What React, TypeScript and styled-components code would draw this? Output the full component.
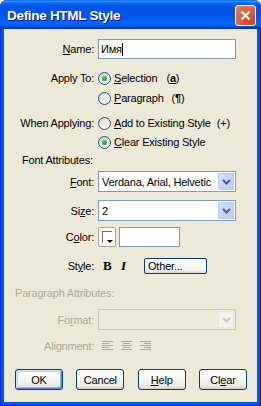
import styled, { createGlobalStyle, css } from 'styled-components';

const GlobalStyle = createGlobalStyle`
  html, body {
    margin: 0;
    padding: 0;
    background: #ffffff;
  }
  body {
    font-family: 'Liberation Sans', Arial, 'Noto Sans', sans-serif;
    font-size: 11px;
    letter-spacing: -0.2px;
    color: #000000;
  }
`;

const Window = styled.div`
  width: 261px;
  height: 406px;
  display: flex;
  flex-direction: column;
  background: #0055e5;
  box-shadow: inset 1px 0 #0831d9, inset -1px 0 #001ea0, inset 0 -1px #001ea0;
  box-sizing: border-box;
  border-radius: 7px 7px 0 0;
  overflow: hidden;
`;

const TitleBar = styled.div`
  height: 29px;
  flex: none;
  display: flex;
  align-items: center;
  justify-content: space-between;
  padding: 0 5px 0 7px;
  background: linear-gradient(
    180deg,
    #0058ee 0%,
    #3593ff 4%,
    #288eff 6%,
    #127dff 8%,
    #036ffc 10%,
    #0262ee 14%,
    #0057e5 20%,
    #0054e3 24%,
    #0055eb 56%,
    #005bf5 66%,
    #026afe 76%,
    #0062ef 86%,
    #0052d6 92%,
    #0040ab 94%,
    #003092 100%
  );
`;

const Title = styled.span`
  color: #ffffff;
  font-family: 'Liberation Sans', Arial, sans-serif;
  font-weight: bold;
  font-size: 13.5px;
  letter-spacing: -0.3px;
  text-shadow: 1px 1px #0f1089;
  margin-top: 1px;
`;

const CloseButton = styled.div`
  width: 21px;
  height: 21px;
  box-sizing: border-box;
  border: 1px solid #ffffff;
  border-radius: 3px;
  background: radial-gradient(circle at 85% 85%, #cc4622 0%, #dc5a36 40%, #e27253 80%, #f09a7e 100%);
  display: flex;
  align-items: center;
  justify-content: center;
  margin-top: 2px;
`;

const Body = styled.div`
  flex: 1;
  margin: 0 4px 4px 4px;
  background: #ece9d8;
  padding-top: 10px;
  display: flex;
  flex-direction: column;
`;

const Row = styled.div<{ $h: number; $mt: number }>`
  display: grid;
  grid-template-columns: 90px 1fr;
  column-gap: 4px;
  align-items: center;
  height: ${(p) => p.$h}px;
  margin-top: ${(p) => p.$mt}px;
  flex: none;
`;

const Label = styled.span<{ $disabled?: boolean }>`
  text-align: right;
  white-space: nowrap;
  color: ${(p) => (p.$disabled ? '#aca899' : '#000000')};
`;

const SectionLabel = styled.div<{ $indent: number; $disabled?: boolean; $mt: number }>`
  height: 14px;
  line-height: 14px;
  margin-top: ${(p) => p.$mt}px;
  padding-left: ${(p) => p.$indent}px;
  color: ${(p) => (p.$disabled ? '#aca899' : '#000000')};
  flex: none;
`;

const Control = styled.div`
  display: flex;
  align-items: center;
  min-width: 0;
`;

const fieldBorder = css`
  border: 1px solid #7f9db9;
  background: #ffffff;
  box-sizing: border-box;
`;

const TextInput = styled.div<{ $w: number }>`
  ${fieldBorder}
  width: ${(p) => p.$w}px;
  height: 20px;
  display: flex;
  align-items: center;
  padding-left: 2px;
`;

const Caret = styled.span`
  display: inline-block;
  width: 1px;
  height: 13px;
  background: #000000;
`;

const RadioLine = styled.label`
  display: flex;
  align-items: center;
  gap: 3px;
  white-space: nowrap;
`;

const RadioCircle = styled.span<{ $checked?: boolean }>`
  width: 13px;
  height: 13px;
  box-sizing: border-box;
  border-radius: 50%;
  border: 1px solid #1c5180;
  background: linear-gradient(135deg, #dcd7cb 0%, #f2f1ea 60%, #ffffff 100%);
  display: flex;
  align-items: center;
  justify-content: center;
  flex: none;

  &::after {
    content: '';
    display: ${(p) => (p.$checked ? 'block' : 'none')};
    width: 5px;
    height: 5px;
    border-radius: 50%;
    background: radial-gradient(circle at 40% 40%, #5ed85a 0%, #21a121 60%, #1a8a1a 100%);
  }
`;

const Hint = styled.span<{ $ml: number }>`
  margin-left: ${(p) => p.$ml}px;
`;

const Select = styled.div<{ $disabled?: boolean }>`
  width: 138px;
  height: 21px;
  box-sizing: border-box;
  border: 1px solid ${(p) => (p.$disabled ? '#c9c7ba' : '#7f9db9')};
  background: ${(p) => (p.$disabled ? '#ece9d8' : '#ffffff')};
  display: flex;
  align-items: center;
  justify-content: space-between;
  padding: 1px;
`;

const SelectValue = styled.span`
  padding-left: 2px;
  overflow: hidden;
  white-space: nowrap;
  flex: 1;
  min-width: 0;
`;

const SelectArrow = styled.span<{ $disabled?: boolean }>`
  width: 16px;
  height: 17px;
  flex: none;
  box-sizing: border-box;
  border: 1px solid ${(p) => (p.$disabled ? '#e8e6dc' : '#b9cdf6')};
  border-radius: 1px;
  background: ${(p) =>
    p.$disabled ? '#f3f2ec' : 'linear-gradient(135deg, #d0def9 0%, #b6cbf7 100%)'};
  display: flex;
  align-items: center;
  justify-content: center;
`;

const ColorButton = styled.div`
  width: 18px;
  height: 20px;
  box-sizing: border-box;
  border: 1px solid #aca899;
  border-radius: 2px;
  background: #fbfbf8;
  position: relative;
  margin-right: 3px;
`;

const Swatch = styled.span`
  position: absolute;
  left: 3px;
  top: 3px;
  width: 10px;
  height: 12px;
  box-sizing: border-box;
  border-top: 1px solid #716f64;
  border-left: 1px solid #716f64;
  background: #ffffff;
`;

const SwatchArrow = styled.span`
  position: absolute;
  right: 2px;
  bottom: 3px;
  width: 0;
  height: 0;
  border-left: 3px solid transparent;
  border-right: 3px solid transparent;
  border-top: 3px solid #000000;
`;

const StyleGlyph = styled.span<{ $italic?: boolean; $ml: number }>`
  font-family: 'Liberation Serif', 'Times New Roman', serif;
  font-weight: bold;
  font-style: ${(p) => (p.$italic ? 'italic' : 'normal')};
  font-size: 13px;
  margin-left: ${(p) => p.$ml}px;
  width: 10px;
`;

const SmallButton = styled.div`
  width: 63px;
  height: 16px;
  box-sizing: border-box;
  border: 1px solid #003c74;
  border-radius: 2px;
  background: linear-gradient(180deg, #ffffff 0%, #f4f3ee 80%, #dcd8cc 100%);
  padding-left: 3px;
  display: flex;
  align-items: center;
  margin-left: 13px;
`;

const AlignGroup = styled.div`
  display: flex;
  gap: 8px;
  padding-left: 4px;
`;

const ButtonRow = styled.div`
  display: flex;
  justify-content: space-between;
  padding: 0 10px 0 11px;
  margin-top: 16px;
  height: 21px;
`;

const Button = styled.div<{ $default?: boolean }>`
  width: 48px;
  height: 21px;
  box-sizing: border-box;
  border: 1px solid #003c74;
  border-radius: 3px;
  background: linear-gradient(180deg, #ffffff 0%, #f3f3ef 60%, #e6e4dc 88%, #d6d0c5 100%);
  display: flex;
  align-items: center;
  justify-content: center;
  ${(p) =>
    p.$default &&
    css`
      box-shadow: inset 1px 1px #cee7ff, inset -1px -1px #6982ee, inset 2px 2px #bcd4f6,
        inset -2px -2px #89adf4;
    `}
`;

function Chevron({ color }: { color: string }) {
  return (
    <svg width="9" height="6" viewBox="0 0 9 6">
      <path d="M1 1 L4.5 4.5 L8 1" fill="none" stroke={color} strokeWidth="2" />
    </svg>
  );
}

function AlignIcon({ kind }: { kind: 'left' | 'center' | 'right' }) {
  const widths = [11, 7, 11, 7, 11];
  return (
    <svg width="11" height="10" viewBox="0 0 11 10">
      {widths.map((w, i) => {
        const x = kind === 'left' ? 0 : kind === 'center' ? (11 - w) / 2 : 11 - w;
        return <rect key={i} x={x} y={i * 2} width={w} height="1" fill="#aca899" />;
      })}
    </svg>
  );
}

function Radio({ checked, children }: { checked?: boolean; children: React.ReactNode }) {
  return (
    <RadioLine>
      <RadioCircle $checked={checked} />
      <span>{children}</span>
    </RadioLine>
  );
}

export default function App() {
  return (
    <>
      <GlobalStyle />
      <Window>
        <TitleBar>
          <Title>Define HTML Style</Title>
          <CloseButton>
            <svg width="11" height="11" viewBox="0 0 11 11">
              <path d="M1.5 1.5 L9.5 9.5 M9.5 1.5 L1.5 9.5" stroke="#ffffff" strokeWidth="2.2" />
            </svg>
          </CloseButton>
        </TitleBar>
        <Body>
          <Row $h={20} $mt={0}>
            <Label>
              <u>N</u>ame:
            </Label>
            <Control>
              <TextInput $w={138}>
                Имя
                <Caret />
              </TextInput>
            </Control>
          </Row>

          <Row $h={18} $mt={10}>
            <Label>Apply To:</Label>
            <Radio checked>
              <u>S</u>election
              <Hint $ml={9}>
                (<b>
                  <u>a</u>
                </b>
                )
              </Hint>
            </Radio>
          </Row>
          <Row $h={18} $mt={2}>
            <span />
            <Radio>
              <u>P</u>aragraph
              <Hint $ml={8}>
                (<b>¶</b>)
              </Hint>
            </Radio>
          </Row>

          <Row $h={18} $mt={7}>
            <Label>When Applying:</Label>
            <Radio>
              <u>A</u>dd to Existing Style
              <Hint $ml={6}>(+)</Hint>
            </Radio>
          </Row>
          <Row $h={18} $mt={1}>
            <span />
            <Radio checked>
              <u>C</u>lear Existing Style
            </Radio>
          </Row>

          <SectionLabel $indent={18} $mt={2}>
            Font Attributes:
          </SectionLabel>

          <Row $h={21} $mt={4}>
            <Label>
              <u>F</u>ont:
            </Label>
            <Select>
              <SelectValue>Verdana, Arial, Helvetic</SelectValue>
              <SelectArrow>
                <Chevron color="#4d6185" />
              </SelectArrow>
            </Select>
          </Row>
          <Row $h={21} $mt={8}>
            <Label>
              Si<u>z</u>e:
            </Label>
            <Select>
              <SelectValue>2</SelectValue>
              <SelectArrow>
                <Chevron color="#4d6185" />
              </SelectArrow>
            </Select>
          </Row>
          <Row $h={20} $mt={6}>
            <Label>
              C<u>o</u>lor:
            </Label>
            <Control>
              <ColorButton>
                <Swatch />
                <SwatchArrow />
              </ColorButton>
              <TextInput $w={61} />
            </Control>
          </Row>
          <Row $h={16} $mt={11}>
            <Label>
              St<u>y</u>le:
            </Label>
            <Control>
              <StyleGlyph $ml={5}>B</StyleGlyph>
              <StyleGlyph $italic $ml={8}>
                I
              </StyleGlyph>
              <SmallButton>Other...</SmallButton>
            </Control>
          </Row>

          <SectionLabel $indent={11} $mt={12} $disabled>
            Paragraph Attributes:
          </SectionLabel>

          <Row $h={21} $mt={9}>
            <Label $disabled>
              Fo<u>r</u>mat:
            </Label>
            <Select $disabled>
              <SelectValue />
              <SelectArrow $disabled>
                <Chevron color="#c9c7ba" />
              </SelectArrow>
            </Select>
          </Row>
          <Row $h={14} $mt={9}>
            <Label $disabled>Alignment:</Label>
            <AlignGroup>
              <AlignIcon kind="left" />
              <AlignIcon kind="center" />
              <AlignIcon kind="right" />
            </AlignGroup>
          </Row>

          <ButtonRow>
            <Button $default>OK</Button>
            <Button>Cancel</Button>
            <Button>
              <u>H</u>elp
            </Button>
            <Button>
              Cl<u>e</u>ar
            </Button>
          </ButtonRow>
        </Body>
      </Window>
    </>
  );
}
